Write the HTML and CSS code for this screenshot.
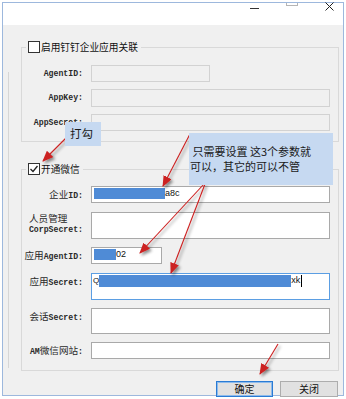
FILE: index.html
```html
<!DOCTYPE html>
<html lang="zh-CN">
<head>
    <meta charset="UTF-8">
    <title>微信设置</title>
    <link rel="stylesheet" href="styles.css">
</head>
<body>
<div class="window">
    <div class="titlebar">
        <span class="tb-min"></span>
        <span class="tb-max"></span>
        <svg class="tb-close" width="9" height="9" viewBox="0 0 9 9"><path d="M0.5 0.5L8.5 8.5M8.5 0.5L0.5 8.5" stroke="#222" stroke-width="1"/></svg>
    </div>
    <div class="client">
        <fieldset class="group">
            <legend><span class="chk"></span>启用钉钉企业应用关联</legend>
            <div class="form">
                <label>AgentID:</label><div class="field off w-short"></div>
                <label>AppKey:</label><div class="field off h18"></div>
                <label>AppSecret:</label><div class="field off"></div>
            </div>
        </fieldset>
        <fieldset class="group group-wx">
            <legend><span class="chk on"><svg width="10" height="10" viewBox="0 0 10 10"><path d="M1.5 5L4 7.5L8.5 2" fill="none" stroke="#222" stroke-width="1.3"/></svg></span>开通微信</legend>
            <div class="form">
                <label><span class="cn">企业</span>ID:</label>
                <div class="field"><span class="sel" style="width:71px"></span><span>a8c</span></div>
                <label class="two"><span><span class="cn">人员管理</span><br>CorpSecret:</span></label>
                <div class="field h27"></div>
                <label><span class="cn">应用</span>AgentID:</label>
                <div class="field w-id"><span class="sel" style="width:22px"></span><span>02</span></div>
                <label><span class="cn">应用</span>Secret:</label>
                <div class="field h27 focus"><span class="lead">Q</span><span class="sel tall" style="width:192px"></span><span>xk</span><span class="caret"></span></div>
                <label><span class="cn">会话</span>Secret:</label>
                <div class="field h26"></div>
                <label>AM<span class="cn">微信网站</span>:</label>
                <div class="field"></div>
            </div>
        </fieldset>
        <div class="buttons">
            <button class="btn btn-default">确定</button>
            <button class="btn btn-close">关闭</button>
        </div>
    </div>
</div>

<svg class="arrows" width="346" height="399" viewBox="0 0 346 399">
    <defs>
        <marker id="head" markerWidth="11" markerHeight="9" refX="10" refY="4.5" orient="auto" markerUnits="userSpaceOnUse">
            <path d="M0 0L11 4.5L0 9z" fill="#cc2020"/>
        </marker>
        <filter id="shade" x="-30%" y="-30%" width="170%" height="170%">
            <feDropShadow dx="2" dy="2" stdDeviation="1.4" flood-color="#000" flood-opacity=".45"/>
        </filter>
    </defs>
    <g stroke="#cc2020" stroke-width="1.1" filter="url(#shade)">
        <line x1="68" y1="136" x2="43" y2="161" marker-end="url(#head)"/>
        <line x1="190" y1="134" x2="163" y2="186" marker-end="url(#head)"/>
        <line x1="204" y1="184" x2="140" y2="253" marker-end="url(#head)"/>
        <line x1="205" y1="184" x2="171" y2="273" marker-end="url(#head)"/>
        <line x1="278" y1="344" x2="260" y2="374" marker-end="url(#head)"/>
    </g>
</svg>

<div class="note note-check">打勾</div>
<div class="note note-params">&nbsp;只需要设置 这3个参数就<br>可以，其它的可以不管</div>
</body>
</html>
```

FILE: styles.css
```css
body{
    margin:0;
    width:346px;
    height:399px;
    background:#fff;
    position:relative;
    overflow:hidden;
    font-family:"Noto Sans CJK SC",sans-serif;
    color:#1a1a1a;
}
.window{
    margin:2px 0 0 2px;
    width:342px;
    height:394px;
    border:1px solid #9db8dd;
    box-sizing:border-box;
    background:#f0f0f0;
}
.titlebar{
    height:22px;
    background:#fff;
    display:flex;
    align-items:flex-start;
    padding-right:9px;
}
.tb-min{
    margin:5px 0 0 auto;
    width:9px;
    height:1px;
    background:#333;
}
.tb-max{
    margin-left:27px;
    width:10px;
    height:2px;
    border:1px solid #b5b5b5;
    border-top:0;
}
.tb-close{
    margin:-1px 0 0 27px;
}
.client{
    height:370px;
    padding-top:16px;
    box-sizing:border-box;
    background:linear-gradient(#d6d6d6,#d6d6d6) 5px 47px / 1px 296px no-repeat;
}

/* group boxes */
.group{
    margin:0 0 0 18px;
    padding:0;
    width:318px;
    box-sizing:border-box;
    border:1px solid #d9d9d9;
    min-inline-size:0;
}
.group-wx{margin-top:21px;}
.group legend{
    margin-left:4px;
    padding:0 3px 0 2px;
    height:12px;
    line-height:12px;
    display:flex;
    align-items:center;
    gap:1px;
    font-size:9.7px;
    color:#111;
}
.chk{
    width:12px;
    height:12px;
    box-sizing:border-box;
    border:1px solid #333;
    background:#fff;
    display:flex;
    align-items:center;
    justify-content:center;
}

/* label / field grid */
.form{
    display:grid;
    grid-template-columns:61px 1fr;
    column-gap:8px;
    row-gap:7px;
    padding:12px 8px 10px 0;
}
.group-wx .form{
    row-gap:8px;
    padding-top:11px;
}
.form label{
    align-self:start;
    text-align:right;
    font:bold 8.2px/17px "Liberation Mono","Noto Sans CJK SC",monospace;
    color:#2a2a2a;
    white-space:nowrap;
}
.form label .cn{
    font-family:"Noto Sans CJK SC",sans-serif;
    font-weight:normal;
    font-size:9.6px;
}
.form label.two{line-height:10px;padding-top:1px;}
.form label.two > span{display:inline-block;text-align:left;}

.field{
    height:17px;
    box-sizing:border-box;
    border:1px solid #a9a9a9;
    background:#fff;
    padding:1px 2px;
    display:flex;
    align-items:flex-start;
    font:9px/11px "Liberation Sans",sans-serif;
    color:#111;
}
.field.off{background:#f0f0f0;border-color:#d2d2d2;}
.field.h18{height:18px;}
.field.h26{height:26px;}
.field.h27{height:27px;}
.field.w-short{width:119px;}
.field.w-id{width:71px;}
.field.focus{border-color:#5b9ee3;padding-left:1px;}
.sel{
    height:11px;
    background:#4f8bd6;
}
.sel.tall{height:12px;}
.lead{font-size:8px;line-height:12px;}
.caret{
    width:1px;
    height:12px;
    margin-left:1px;
    background:#000;
}

/* dialog buttons */
.buttons{
    display:flex;
    justify-content:flex-end;
    gap:7px;
    margin-top:10px;
    padding-right:5px;
}
.btn{
    height:16px;
    padding:0;
    border:1px solid #adadad;
    background:#e1e1e1;
    font:10px/14px "Noto Sans CJK SC",sans-serif;
    color:#111;
}
.btn-default{
    width:57px;
    border-color:#2a7bd4;
    box-shadow:inset 0 0 0 1px #8dbbec;
}
.btn-close{width:58px;}

/* annotations drawn over the screenshot */
.arrows{
    position:absolute;
    left:0;
    top:0;
    pointer-events:none;
}
.note{
    position:absolute;
    background:#c6d9f1;
    color:#1a1a1a;
    font-size:11px;
    line-height:15px;
    box-sizing:border-box;
}
.note-check{
    left:65px;
    top:122px;
    width:36px;
    height:24px;
    padding:4px 0 0 5px;
    font-size:11.5px;
}
.note-params{
    left:189px;
    top:133px;
    width:144px;
    height:52px;
    padding:11px 0 0 1px;
    white-space:nowrap;
}
```
